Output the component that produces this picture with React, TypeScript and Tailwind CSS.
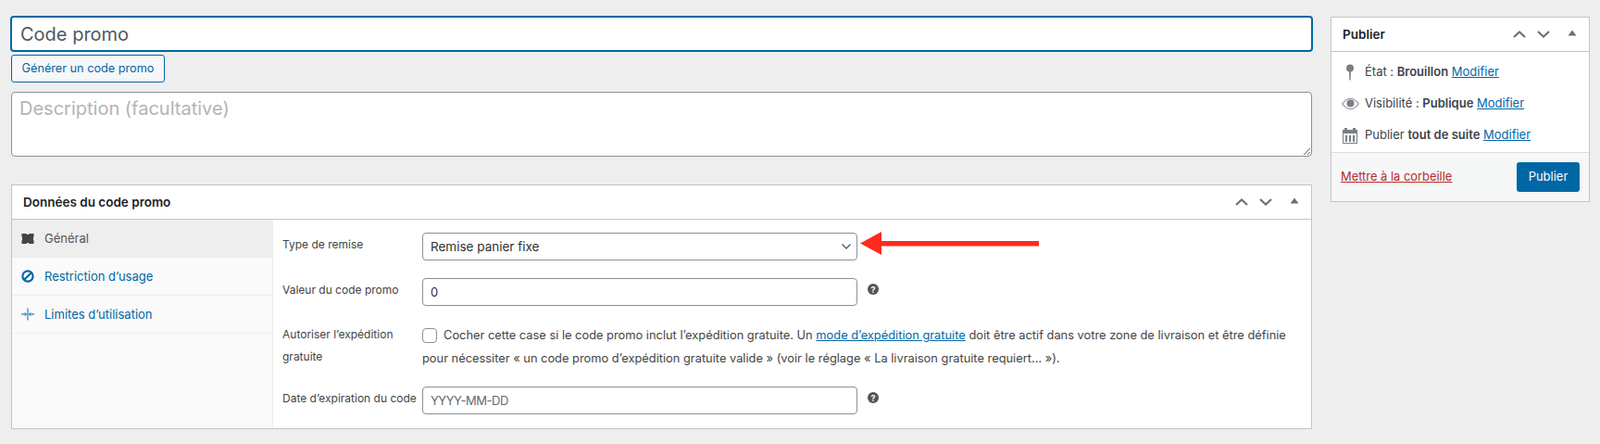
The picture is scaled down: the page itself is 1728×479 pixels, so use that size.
import React from 'react';

const font = "font-['Inter','Noto_Sans',sans-serif]";

const Chevrons: React.FC = () => (
  <div className="flex items-center">
    <svg width="16" height="10" viewBox="0 0 16 10" fill="none" stroke="#6b7075" strokeWidth="2.2" className="mr-[10px]">
      <path d="M2 8 L8 2.5 L14 8" />
    </svg>
    <svg width="16" height="10" viewBox="0 0 16 10" fill="none" stroke="#6b7075" strokeWidth="2.2" className="mr-[18px]">
      <path d="M2 2 L8 7.5 L14 2" />
    </svg>
    <svg width="10" height="7" viewBox="0 0 10 7" fill="#6b7075" className="mb-[3px]">
      <path d="M5 0.5 L9.5 6.5 L0.5 6.5 Z" />
    </svg>
  </div>
);

const HelpIcon: React.FC = () => (
  <span className="ml-[11px] flex h-[12px] w-[12px] items-center justify-center rounded-full bg-[#555] text-[9px] font-bold leading-none text-white">
    ?
  </span>
);

const Tab: React.FC<{ label: string; icon: React.ReactNode; active?: boolean }> = ({ label, icon, active }) => (
  <div
    className={`flex h-[41px] items-center border-b border-[#eee] pl-[10px] text-[13px] ${
      active ? 'bg-[#eee] text-[#555]' : 'text-[#0067a5]'
    }`}
  >
    <span className="flex w-[25px] items-center">{icon}</span>
    <span className="mt-[2px]">{label}</span>
  </div>
);

const Row: React.FC<{ label: string; className: string; children: React.ReactNode }> = ({ label, className, children }) => (
  <div className={`flex items-center ${className}`}>
    <label className="mb-[5px] w-[151px] shrink-0 whitespace-nowrap text-[12px] text-[#444]">{label}</label>
    {children}
  </div>
);

const StatusRow: React.FC<{ icon: React.ReactNode; children: React.ReactNode }> = ({ icon, children }) => (
  <div className="flex h-[34px] items-center text-[13px] text-[#3c434a]">
    <span className="flex w-[25px] shrink-0 items-center">{icon}</span>
    <span>{children}</span>
  </div>
);

const inputClass =
  'h-[30px] w-[470px] rounded-[4px] border border-[#8c8f94] bg-white px-[8px] text-[#2c3338] outline-none';

const App: React.FC = () => {
  return (
    <div className={`relative flex h-[479px] overflow-hidden bg-[#eee] pl-[11px] pr-[11px] ${font}`}>
      <div className="w-[1407px] shrink-0 pt-[17px]">
        <input
          readOnly
          value="Code promo"
          className="h-[39px] w-full rounded-[4px] border-2 border-[#0067a5] bg-white pl-[9px] pt-[1px] text-[20px] text-[#50575e] outline-none"
        />
        <button className="ml-[1px] mt-[3px] block h-[30px] w-[166px] rounded-[3px] border border-[#0067a5] bg-[#f6f7f7] text-[12.7px] text-[#0067a5]">
          Générer un code promo
        </button>
        <textarea
          readOnly
          placeholder="Description (facultative)"
          className="ml-[1px] mt-[10px] block h-[70px] w-[1405px] rounded-[4px] border border-[#8c8f94] bg-white px-[8px] py-[2px] text-[20px] text-[#2c3338] outline-none placeholder:text-[#b4b4b4]"
        />

        <div className="ml-[1px] mt-[30px] h-[264px] w-[1405px] border border-[#c3c4c7] bg-white">
          <div className="flex h-[37px] items-center justify-between border-b border-[#c3c4c7] pl-[12px] pr-[13px]">
            <h2 className="text-[13.5px] font-semibold text-[#1d2327]">Données du code promo</h2>
            <Chevrons />
          </div>
          <div className="flex h-[225px]">
            <div className="w-[282px] shrink-0 border-r border-[#eee] bg-[#fafafa]">
              <Tab
                active
                label="Général"
                icon={
                  <svg width="14" height="11" viewBox="0 0 14 11" fill="#444">
                    <path d="M0.5 0 H5.5 L6 1 H8 L8.5 0 H13.5 V3.2 Q12.3 5.5 13.5 7.8 V11 H8.5 L8 10 H6 L5.5 11 H0.5 V7.8 Q1.7 5.5 0.5 3.2 Z" />
                  </svg>
                }
              />
              <Tab
                label="Restriction d’usage"
                icon={
                  <svg width="14" height="14" viewBox="0 0 14 14" fill="none" stroke="#0067a5" strokeWidth="2.2">
                    <circle cx="7" cy="7" r="5.6" />
                    <path d="M3.2 10.8 L10.8 3.2" />
                  </svg>
                }
              />
              <Tab
                label="Limites d’utilisation"
                icon={
                  <svg width="14" height="14" viewBox="0 0 14 14" fill="none" stroke="#0067a5" strokeWidth="1">
                    <path d="M7 0.5 V13.5" />
                    <path d="M0 7 H5.5 M3.8 5.3 L5.5 7 L3.8 8.7 M14 7 H8.5 M10.2 5.3 L8.5 7 L10.2 8.7" />
                  </svg>
                }
              />
            </div>
            <div className="flex-1 pl-[10px] pt-[14px]">
              <Row label="Type de remise" className="">
                <div className="relative">
                  <select className={`${inputClass} appearance-none text-[13.5px]`} defaultValue="fixed">
                    <option value="fixed">Remise panier fixe</option>
                  </select>
                  <svg
                    width="12"
                    height="8"
                    viewBox="0 0 12 8"
                    fill="none"
                    stroke="#50575e"
                    strokeWidth="1.3"
                    className="pointer-events-none absolute right-[6px] top-[11px]"
                  >
                    <path d="M1.5 1.5 L6 6 L10.5 1.5" />
                  </svg>
                </div>
              </Row>
              <Row label="Valeur du code promo" className="mt-[19px]">
                <input readOnly value="0" className={`${inputClass} text-[13px]`} />
                <span className="mb-[6px]">
                  <HelpIcon />
                </span>
              </Row>
              <div className="mt-[19px] flex">
                <label className="w-[151px] shrink-0 text-[12px] leading-[24px] text-[#444]">
                  Autoriser l’expédition
                  <br />
                  gratuite
                </label>
                <p className="w-[945px] text-[12.85px] leading-[25px] text-[#444]">
                  <input
                    type="checkbox"
                    className="mr-[7px] inline-block h-[16px] w-[16px] appearance-none rounded-[4px] border border-[#8c8f94] bg-white align-[-4px]"
                  />
                  Cocher cette case si le code promo inclut l’expédition gratuite. Un{' '}
                  <a className="text-[#0067a5] underline">mode d’expédition gratuite</a> doit être actif dans votre zone de
                  livraison et être définie pour nécessiter « un code promo d’expédition gratuite valide » (voir le réglage
                  « La livraison gratuite requiert… »).
                </p>
              </div>
              <Row label="Date d’expiration du code" className="mt-[18px]">
                <input
                  readOnly
                  placeholder="YYYY-MM-DD"
                  className={`${inputClass} text-[13px] tracking-[-0.45px] placeholder:text-[#646970]`}
                />
                <span className="mb-[6px]">
                  <HelpIcon />
                </span>
              </Row>
            </div>
          </div>
        </div>
      </div>

      <div className="ml-[19px] w-[280px] shrink-0 pt-[18px]">
        <div className="h-[200px] border border-[#c3c4c7] bg-white">
          <div className="flex h-[37px] items-center justify-between border-b border-[#c3c4c7] pl-[12px] pr-[13px]">
            <h2 className="text-[13.5px] font-semibold text-[#1d2327]">Publier</h2>
            <Chevrons />
          </div>
          <div className="h-[109px] border-b border-[#dcdcde] px-[11px] pt-[5px]">
            <StatusRow
              icon={
                <svg width="18" height="20" viewBox="0 0 18 20" fill="#7a7f85">
                  <circle cx="9" cy="5.5" r="4" />
                  <path d="M8 8 H10 L9.6 18.5 H8.4 Z" />
                </svg>
              }
            >
              État : <b className="font-semibold">Brouillon</b> <a className="text-[#0067a5] underline">Modifier</a>
            </StatusRow>
            <StatusRow
              icon={
                <svg width="19" height="14" viewBox="0 0 19 14" fill="none">
                  <path d="M0.8 7 C3.5 3 6.5 1.5 9.5 1.5 C12.5 1.5 15.5 3 18.2 7 C15.5 11 12.5 12.5 9.5 12.5 C6.5 12.5 3.5 11 0.8 7 Z" stroke="#8c8f94" strokeWidth="1.2" />
                  <circle cx="9.5" cy="6.6" r="4" fill="#7a7f85" />
                </svg>
              }
            >
              Visibilité : <b className="font-semibold">Publique</b> <a className="text-[#0067a5] underline">Modifier</a>
            </StatusRow>
            <StatusRow
              icon={
                <svg width="18" height="18" viewBox="0 0 18 18" fill="#7a7f85">
                  <path d="M1 3 H3 V1 H6 V3 H12 V1 H15 V3 H17 V18 H1 Z M2 7 V17 H16 V7 Z" fillRule="evenodd" />
                  <path d="M4 9 H6 V16 H4 Z M8 9 H10 V16 H8 Z M12 9 H14 V16 H12 Z" />
                </svg>
              }
            >
              Publier <b className="font-semibold">tout de suite</b> <a className="text-[#0067a5] underline">Modifier</a>
            </StatusRow>
          </div>
          <div className="flex h-[52px] items-center justify-between bg-[#f6f7f7] pl-[10px] pr-[10px]">
            <a className="text-[12.9px] text-[#b32d2e] underline">Mettre à la corbeille</a>
            <button className="h-[32px] w-[68px] rounded-[3px] bg-[#0067a5] text-[13px] text-white">Publier</button>
          </div>
        </div>
      </div>

      <svg width="194" height="26" viewBox="0 0 194 26" className="absolute left-[929px] top-[250px]" fill="#ff2a1f">
        <path d="M0 12.5 L23 0 V10 H193 V15.5 H23 V25 Z" />
      </svg>
    </div>
  );
};

export default App;
